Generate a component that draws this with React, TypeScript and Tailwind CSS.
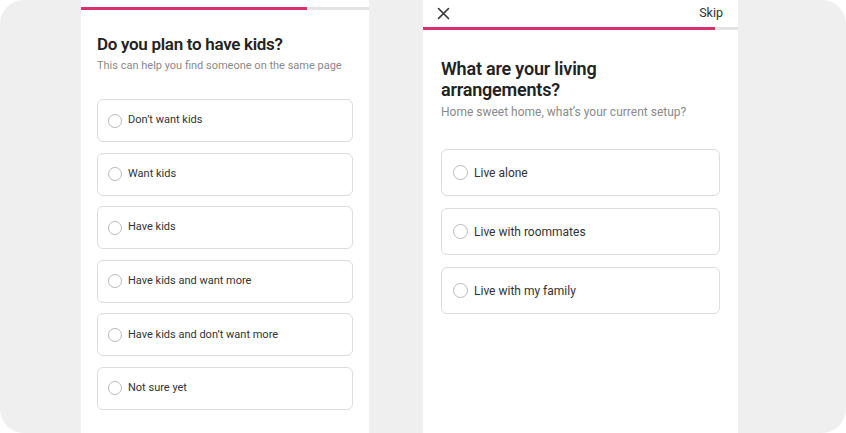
import React from "react";

const font = { fontFamily: "Roboto, 'Noto Sans', sans-serif" };

function Radio({ size }: { size: number }) {
  return (
    <span
      className="shrink-0 rounded-full border border-[#b9b9b9] bg-white"
      style={{ width: size, height: size }}
    />
  );
}

function OptionA({ label }: { label: string }) {
  return (
    <div className="flex h-[43px] items-center gap-[6px] rounded-[6px] border border-[#dcdcdc] bg-white pl-[10px]">
      <Radio size={14} />
      <span className="text-[11px] text-[#333]">{label}</span>
    </div>
  );
}

function OptionB({ label }: { label: string }) {
  return (
    <div className="flex h-[47px] items-center gap-[6px] rounded-[6px] border border-[#dcdcdc] bg-white pl-[11px]">
      <Radio size={15} />
      <span className="text-[12px] text-[#333]">{label}</span>
    </div>
  );
}

export default function App() {
  const kids = [
    "Don\u2019t want kids",
    "Want kids",
    "Have kids",
    "Have kids and want more",
    "Have kids and don\u2019t want more",
    "Not sure yet",
  ];
  const living = ["Live alone", "Live with roommates", "Live with my family"];

  return (
    <div className="h-[433px] w-[846px] bg-white" style={font}>
      <div className="flex h-full w-full gap-[54px] overflow-hidden rounded-[24px] bg-[#efefef] pl-[81px]">
        {/* Kids question */}
        <div className="flex h-full w-[288px] flex-col bg-white pt-[7px]">
          <div className="flex h-[3px] w-full">
            <div className="h-full w-[226px] bg-[#d9316f]" />
            <div className="h-full flex-1 bg-[#e3e3e3]" />
          </div>
          <div className="px-[16px]">
            <h1 className="mt-[24px] text-[17px] font-semibold leading-[21px] tracking-[-0.3px] text-[#222]">
              Do you plan to have kids?
            </h1>
            <p className="mt-[4px] whitespace-nowrap text-[11px] leading-[14px] text-[#8a8a8a]">
              This can help you find someone on the same page
            </p>
            <div className="mt-[26px] flex flex-col gap-[10.6px]">
              {kids.map((k) => (
                <OptionA key={k} label={k} />
              ))}
            </div>
          </div>
        </div>

        {/* Living arrangements question */}
        <div className="flex h-full w-[315px] flex-col bg-white">
          <div className="flex h-[26px] items-center justify-between pl-[14px] pr-[15px]">
            <svg width="13" height="13" viewBox="0 0 13 13" fill="none">
              <path d="M1.5 1.5l10 10M11.5 1.5l-10 10" stroke="#333" strokeWidth="1.6" strokeLinecap="round" />
            </svg>
            <span className="text-[12.5px] text-[#333]">Skip</span>
          </div>
          <div className="mt-[1px] flex h-[3px] w-full">
            <div className="h-full w-[292px] bg-[#d9316f]" />
            <div className="h-full flex-1 bg-[#e3e3e3]" />
          </div>
          <div className="pl-[18px] pr-[18px]">
            <h1 className="mt-[28px] text-[18px] font-semibold leading-[21px] tracking-[-0.2px] text-[#222]">
              What are your living
              <br />
              arrangements?
            </h1>
            <p className="mt-[5px] whitespace-nowrap text-[12px] leading-[15px] text-[#8a8a8a]">
              Home sweet home, what’s your current setup?
            </p>
            <div className="mt-[29px] flex flex-col gap-[12px]">
              {living.map((l) => (
                <OptionB key={l} label={l} />
              ))}
            </div>
          </div>
        </div>
      </div>
    </div>
  );
}
